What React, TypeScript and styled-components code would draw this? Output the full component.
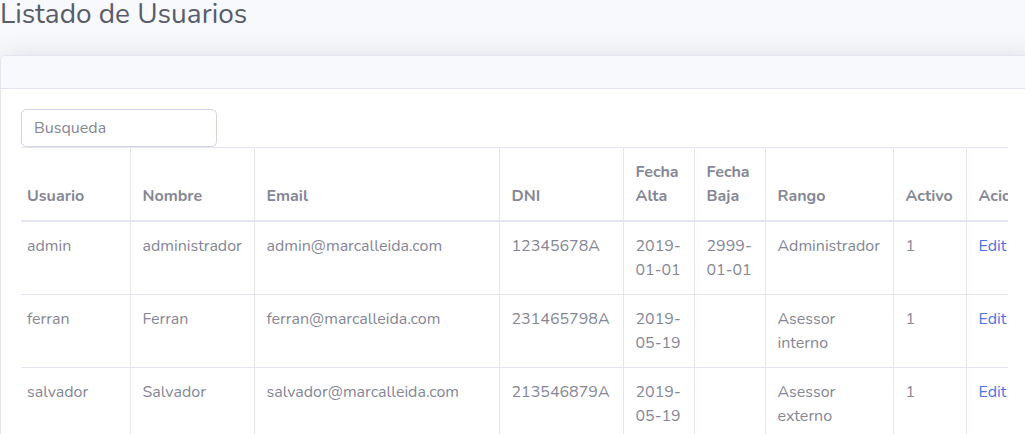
import styled, {createGlobalStyle} from "styled-components";

const GlobalStyle = createGlobalStyle`
  html, body {
    margin: 0;
    padding: 0;
    background: #f8f9fc;
    overflow: hidden;
  }
  body {
    font-family: Nunito, Lato, "Noto Sans", sans-serif;
    font-size: 16px;
    line-height: 1.5;
    color: #858796;
  }
  * { box-sizing: border-box; }
`

const Page = styled.div`
  width: 1040px;
`

const Title = styled.h1`
  margin: -3px 0 24px 0;
  font-size: 28px;
  line-height: 34px;
  font-weight: 400;
  color: #5a5c69;
`

const Card = styled.div`
  background: #fff;
  border: 1px solid #e3e6f0;
  border-radius: 5.6px;
  box-shadow: 0 2.4px 28px 0 rgba(58, 59, 69, 0.15);
  overflow: hidden;
`

const CardHeader = styled.div`
  height: 33px;
  background: #f8f9fc;
  border-bottom: 1px solid #e3e6f0;
`

const CardBody = styled.div`
  padding: 20px;
`

const SearchInput = styled.input`
  display: block;
  width: 196px;
  height: 38px;
  padding: 6px 12px;
  font: inherit;
  color: #6e707e;
  border: 1px solid #d1d3e2;
  border-radius: 5.6px;
  outline: none;
  &::placeholder {
    color: #858796;
    opacity: 1;
  }
`

const TableWrap = styled.div`
  width: 987px;
  overflow: hidden;
`

const Table = styled.table`
  table-layout: fixed;
  border-collapse: collapse;
  width: 1060px;
  color: #858796;
`

const Cell = styled.td<{ $head?: boolean }>`
  padding: 12px 12px;
  text-align: left;
  vertical-align: ${p => p.$head ? "bottom" : "top"};
  font-weight: ${p => p.$head ? 700 : 400};
  border-top: 1px solid #e3e6f0;
  border-left: 1px solid #e3e6f0;
  border-bottom: ${p => p.$head ? "2px" : "1px"} solid #e3e6f0;
  &:first-child {
    border-left: none;
    padding-left: 6px;
  }
`

const EditLink = styled.a`
  color: #4e73df;
  text-decoration: none;
  white-space: nowrap;
`

const columns = [
  {title: "Usuario", width: 109},
  {title: "Nombre", width: 124},
  {title: "Email", width: 245},
  {title: "DNI", width: 124},
  {title: "Fecha Alta", width: 71},
  {title: "Fecha Baja", width: 71},
  {title: "Rango", width: 128},
  {title: "Activo", width: 73},
  {title: "Aciones", width: 115},
]

const users = [
  {user: "admin", name: "administrador", email: "admin@marcalleida.com", dni: "12345678A", alta: "2019-01-01", baja: "2999-01-01", rango: "Administrador", activo: 1},
  {user: "ferran", name: "Ferran", email: "ferran@marcalleida.com", dni: "231465798A", alta: "2019-05-19", baja: "", rango: "Asessor interno", activo: 1},
  {user: "salvador", name: "Salvador", email: "salvador@marcalleida.com", dni: "213546879A", alta: "2019-05-19", baja: "", rango: "Asessor externo", activo: 1},
]

// dates wrap after the first hyphen in the narrow columns
function DateText({value}: { value: string }) {
  if (!value) return null
  const i = value.indexOf("-")
  return <>{value.slice(0, i + 1)}<wbr/>{value.slice(i + 1)}</>
}

export default function App() {
  return (
    <Page>
      <GlobalStyle/>
      <Title>Listado de Usuarios</Title>
      <Card>
        <CardHeader/>
        <CardBody>
          <SearchInput placeholder="Busqueda"/>
          <TableWrap>
            <Table>
              <colgroup>
                {columns.map(c => <col key={c.title} style={{width: c.width}}/>)}
              </colgroup>
              <thead>
                <tr>
                  {columns.map(c => <Cell as="th" $head key={c.title}>{c.title}</Cell>)}
                </tr>
              </thead>
              <tbody>
                {users.map(u => (
                  <tr key={u.user}>
                    <Cell>{u.user}</Cell>
                    <Cell>{u.name}</Cell>
                    <Cell>{u.email}</Cell>
                    <Cell>{u.dni}</Cell>
                    <Cell><DateText value={u.alta}/></Cell>
                    <Cell><DateText value={u.baja}/></Cell>
                    <Cell>{u.rango}</Cell>
                    <Cell>{u.activo}</Cell>
                    <Cell><EditLink href="#">Edit</EditLink></Cell>
                  </tr>
                ))}
              </tbody>
            </Table>
          </TableWrap>
        </CardBody>
      </Card>
    </Page>
  )
}
